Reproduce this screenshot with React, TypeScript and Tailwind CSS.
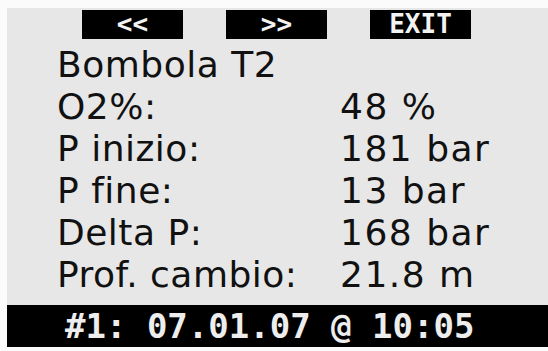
const rows = [
  { label: "Bombola T2", value: "" },
  { label: "O2%:", value: "48 %" },
  { label: "P inizio:", value: "181 bar" },
  { label: "P fine:", value: "13 bar" },
  { label: "Delta P:", value: "168 bar" },
  { label: "Prof. cambio:", value: "21.8 m" },
];

const buttons = ["<<", ">>", "EXIT"];

export default function App() {
  return (
    <div className="h-[351px] w-[548px] overflow-hidden bg-[#fbfbfb] pl-[7px] pt-[8px]">
      <div className="flex h-[339px] flex-col bg-[#e7e7e7]">
        <div className="mt-[2px] flex gap-[43px] pl-[75px]">
          {buttons.map((b) => (
            <div
              key={b}
              className="flex h-[29px] w-[101px] items-center justify-center bg-black font-['DejaVu_Sans_Mono',monospace] text-[26px] font-bold leading-[29px] text-[#f2f2f2]"
            >
              {b}
            </div>
          ))}
        </div>

        <div className="mt-[5px] flex flex-col pl-[50px] font-['DejaVu_Sans',sans-serif] text-[36px] leading-[42px] tracking-[0.5px] text-[#111]">
          {rows.map((r) => (
            <div key={r.label} className="flex h-[42px] whitespace-pre">
              <span className="w-[283px]">{r.label}</span>
              <span className="tracking-[1.5px]">{r.value}</span>
            </div>
          ))}
        </div>

        <div className="mt-auto flex h-[42px] items-center bg-black pl-[58px] font-['DejaVu_Sans_Mono',monospace] text-[34px] font-bold leading-[42px] text-[#ededed] whitespace-pre">
          #1: 07.01.07 @ 10:05
        </div>
      </div>
      <div className="h-[4px]" />
    </div>
  );
}
